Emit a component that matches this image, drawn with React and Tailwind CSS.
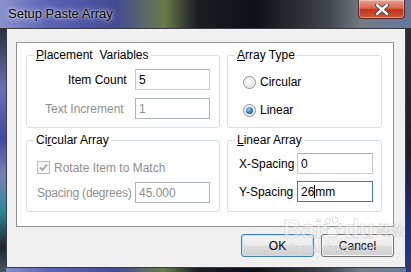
import React from 'react';

const font = "font-['Liberation_Sans',Arial,sans-serif]";

function GroupBox({ title, className = '', children }) {
  return (
    <div className={`relative border border-[#d5dfe5] rounded-[3px] ${className}`}>
      <span className="absolute -top-[8px] left-[7px] px-[2px] bg-white leading-[15px] text-black whitespace-nowrap">
        {title}
      </span>
      {children}
    </div>
  );
}

function TextBox({ value, disabled = false, focused = false, className = '' }) {
  const border = focused
    ? 'border-[#3d7bad]'
    : disabled
    ? 'border-[#adb2b5]'
    : 'border-[#c5c9cc] border-t-[#abadb3]';
  return (
    <div
      className={`h-[21px] border bg-white flex items-center pl-[3px] ${border} ${
        disabled ? 'text-[#8f8f8f]' : 'text-black'
      } ${className}`}
    >
      {focused ? (
        <>
          <span>26</span>
          <span className="w-px h-[13px] bg-black" />
          <span>mm</span>
        </>
      ) : (
        value
      )}
    </div>
  );
}

function Radio({ checked, label }) {
  return (
    <div className="flex items-center h-[16px]">
      <span className="w-[13px] h-[13px] rounded-full border border-[#8e8f8f] bg-[radial-gradient(circle_at_40%_35%,#ffffff_0%,#e6e6e6_55%,#c8c8c8_100%)] flex items-center justify-center shadow-[inset_0_0_0_1px_#f4f4f4]">
        {checked && (
          <span className="w-[7px] h-[7px] rounded-full bg-[radial-gradient(circle_at_40%_35%,#8fd3ff_0%,#2a7ab8_55%,#0f3f6b_100%)]" />
        )}
      </span>
      <span className="ml-[4px] text-black">{label}</span>
    </div>
  );
}

function Button({ label, isDefault }) {
  return (
    <div
      className={`w-[73px] h-[23px] rounded-[3px] border flex items-center justify-center text-black ${
        isDefault
          ? 'border-[#3c7fb1] shadow-[inset_0_0_0_1px_#b7e4fb]'
          : 'border-[#707070] shadow-[inset_0_0_0_1px_#fbfbfb]'
      } bg-[linear-gradient(180deg,#f3f3f3_0%,#ececec_48%,#dddddd_52%,#cfcfcf_100%)]`}
    >
      {label}
    </div>
  );
}

// faint site watermark sitting over the buttons
function Watermark() {
  return (
    <div className="absolute left-[283px] top-[216px] pointer-events-none select-none opacity-80">
      <div className="flex items-end">
        <span className="text-[25px] font-bold leading-[26px] text-white/50 [-webkit-text-stroke:0.6px_#c6c6c6]">Bai</span>
        <svg width="22" height="24" viewBox="0 0 22 24" className="mb-[2px]">
          <g fill="rgba(255,255,255,0.55)" stroke="#c6c6c6" strokeWidth="0.8">
            <ellipse cx="6" cy="5" rx="2.6" ry="3.2" />
            <ellipse cx="13" cy="4" rx="2.6" ry="3.2" />
            <ellipse cx="3" cy="11" rx="2.3" ry="2.8" />
            <ellipse cx="18" cy="10" rx="2.3" ry="2.8" />
            <path d="M10 11 C6 11 4 17 6 20 C8 22 13 22 15 20 C17 17 14 11 10 11 Z" />
          </g>
        </svg>
        <span className="text-[25px] font-bold leading-[26px] text-white/50 [-webkit-text-stroke:0.6px_#c6c6c6]">du</span>
        <span className="ml-[2px] mb-[6px] text-[14px] leading-[14px] text-white/60 [-webkit-text-stroke:0.4px_#c6c6c6] font-['Noto_Sans_CJK_SC',sans-serif]">经验</span>
      </div>
      <div className="ml-[6px] text-[11px] leading-[12px] text-white/70 [-webkit-text-stroke:0.3px_#bdbdbd]">jingyan.baidu.com</div>
    </div>
  );
}

export default function App() {
  return (
    <div
      className={`relative w-[411px] h-[272px] overflow-hidden text-[12px] ${font} bg-[linear-gradient(90deg,#8a92cc_0%,#5a62b4_12%,#444a92_28%,#6a7a48_40%,#1a1d22_48%,#0e1014_62%,#41464c_80%,#747b82_88%,#6377a0_100%)]`}
    >
      {/* title bar */}
      <div className="h-[28px] flex items-center pl-[8px] pb-[1px] text-[13px] text-black [text-shadow:0_0_6px_rgba(255,255,255,0.9),0_0_2px_rgba(255,255,255,0.9)]">
        Setup Paste Array
      </div>
      <div className="absolute top-0 right-[6px] w-[47px] h-[19px] rounded-b-[4px] border border-t-0 border-[#5b2a26] bg-[linear-gradient(180deg,#e8a493_0%,#d9634d_45%,#c2301b_55%,#cf5a3a_100%)] flex items-center justify-center shadow-[inset_0_0_0_1px_rgba(255,255,255,0.35)]">
        <svg width="14" height="11" viewBox="0 0 14 11">
          <path d="M2 1 L12 10 M12 1 L2 10" stroke="#3a3a3a" strokeWidth="4" strokeLinecap="round" />
          <path d="M2 1 L12 10 M12 1 L2 10" stroke="#ffffff" strokeWidth="2.4" strokeLinecap="round" />
        </svg>
      </div>

      {/* side strips */}
      <div className="absolute left-0 top-[28px] w-[6px] h-[244px] bg-[linear-gradient(180deg,#2c2f38_0%,#6a6fb8_25%,#3d4aa0_45%,#7a7fb8_60%,#2c8a96_75%,#20252c_90%,#4a5560_100%)]" />
      <div className="absolute right-0 top-[28px] w-[5px] h-[244px] bg-[linear-gradient(180deg,#2a2d33_0%,#1d2028_50%,#1f2f8a_85%,#2a3a7a_100%)]" />

      {/* client area */}
      <div className="absolute left-[6px] top-[28px] w-[400px] h-[240px] border border-[#3a3f46] bg-[#f0f0f0]">
        <div className="ml-[9px] mt-[13px] mr-[11px] h-[185px] border border-[#8e8f8f] border-t-[#9a9a9a] bg-white pt-[12px] pl-[9px] pr-[11px]">
          <div className="grid grid-cols-[194px_155px] gap-x-[7px] gap-y-[12px]">
            <GroupBox title={<><u>P</u>lacement&nbsp; Variables</>} className="h-[73px]">
              <div className="pt-[13px] flex flex-col gap-[8px]">
                <div className="flex items-center">
                  <span className="w-[108px] pl-[41px] text-black whitespace-nowrap">Item Count</span>
                  <TextBox value="5" className="w-[75px]" />
                </div>
                <div className="flex items-center">
                  <span className="w-[108px] pl-[18px] text-[#8f8f8f] whitespace-nowrap">Text Increment</span>
                  <TextBox value="1" disabled className="w-[75px]" />
                </div>
              </div>
            </GroupBox>

            <GroupBox title={<><u>A</u>rray Type</>} className="h-[73px]">
              <div className="pt-[18px] pl-[15px] flex flex-col gap-[12px]">
                <Radio label="Circular" />
                <Radio label="Linear" checked />
              </div>
            </GroupBox>

            <GroupBox title={<>Ci<u>r</u>cular Array</>} className="h-[72px]">
              <div className="pt-[20px] pl-[10px]">
                <div className="flex items-center h-[13px]">
                  <span className="w-[13px] h-[13px] border border-[#bcbcbc] bg-[#f4f4f4] flex items-center justify-center">
                    <svg width="9" height="9" viewBox="0 0 9 9">
                      <path d="M1 4.5 L3.5 7 L8 1.5" fill="none" stroke="#a8a8a8" strokeWidth="1.8" />
                    </svg>
                  </span>
                  <span className="ml-[4px] text-[#8f8f8f] whitespace-nowrap">Rotate Item to Match</span>
                </div>
                <div className="flex items-center mt-[8px]">
                  <span className="w-[98px] shrink-0 text-[#8f8f8f] whitespace-nowrap tracking-[-0.2px]">Spacing (degrees)</span>
                  <TextBox value="45.000" disabled className="w-[75px] h-[20px]" />
                </div>
              </div>
            </GroupBox>

            <GroupBox title={<><u>L</u>inear Array</>} className="h-[72px]">
              <div className="pt-[12px] flex flex-col gap-[7px]">
                <div className="flex items-center">
                  <span className="w-[69px] pl-[11px] text-black whitespace-nowrap">X-Spacing</span>
                  <TextBox value="0" className="w-[76px]" />
                </div>
                <div className="flex items-center">
                  <span className="w-[69px] pl-[11px] text-black whitespace-nowrap">Y-Spacing</span>
                  <TextBox focused className="w-[76px]" />
                </div>
              </div>
            </GroupBox>
          </div>
        </div>

        {/* buttons */}
        <div className="flex justify-end gap-[7px] mt-[7px] mr-[11px]">
          <Button label="OK" isDefault />
          <Button label="Cancel" />
        </div>
      </div>

      <Watermark />
    </div>
  );
}
